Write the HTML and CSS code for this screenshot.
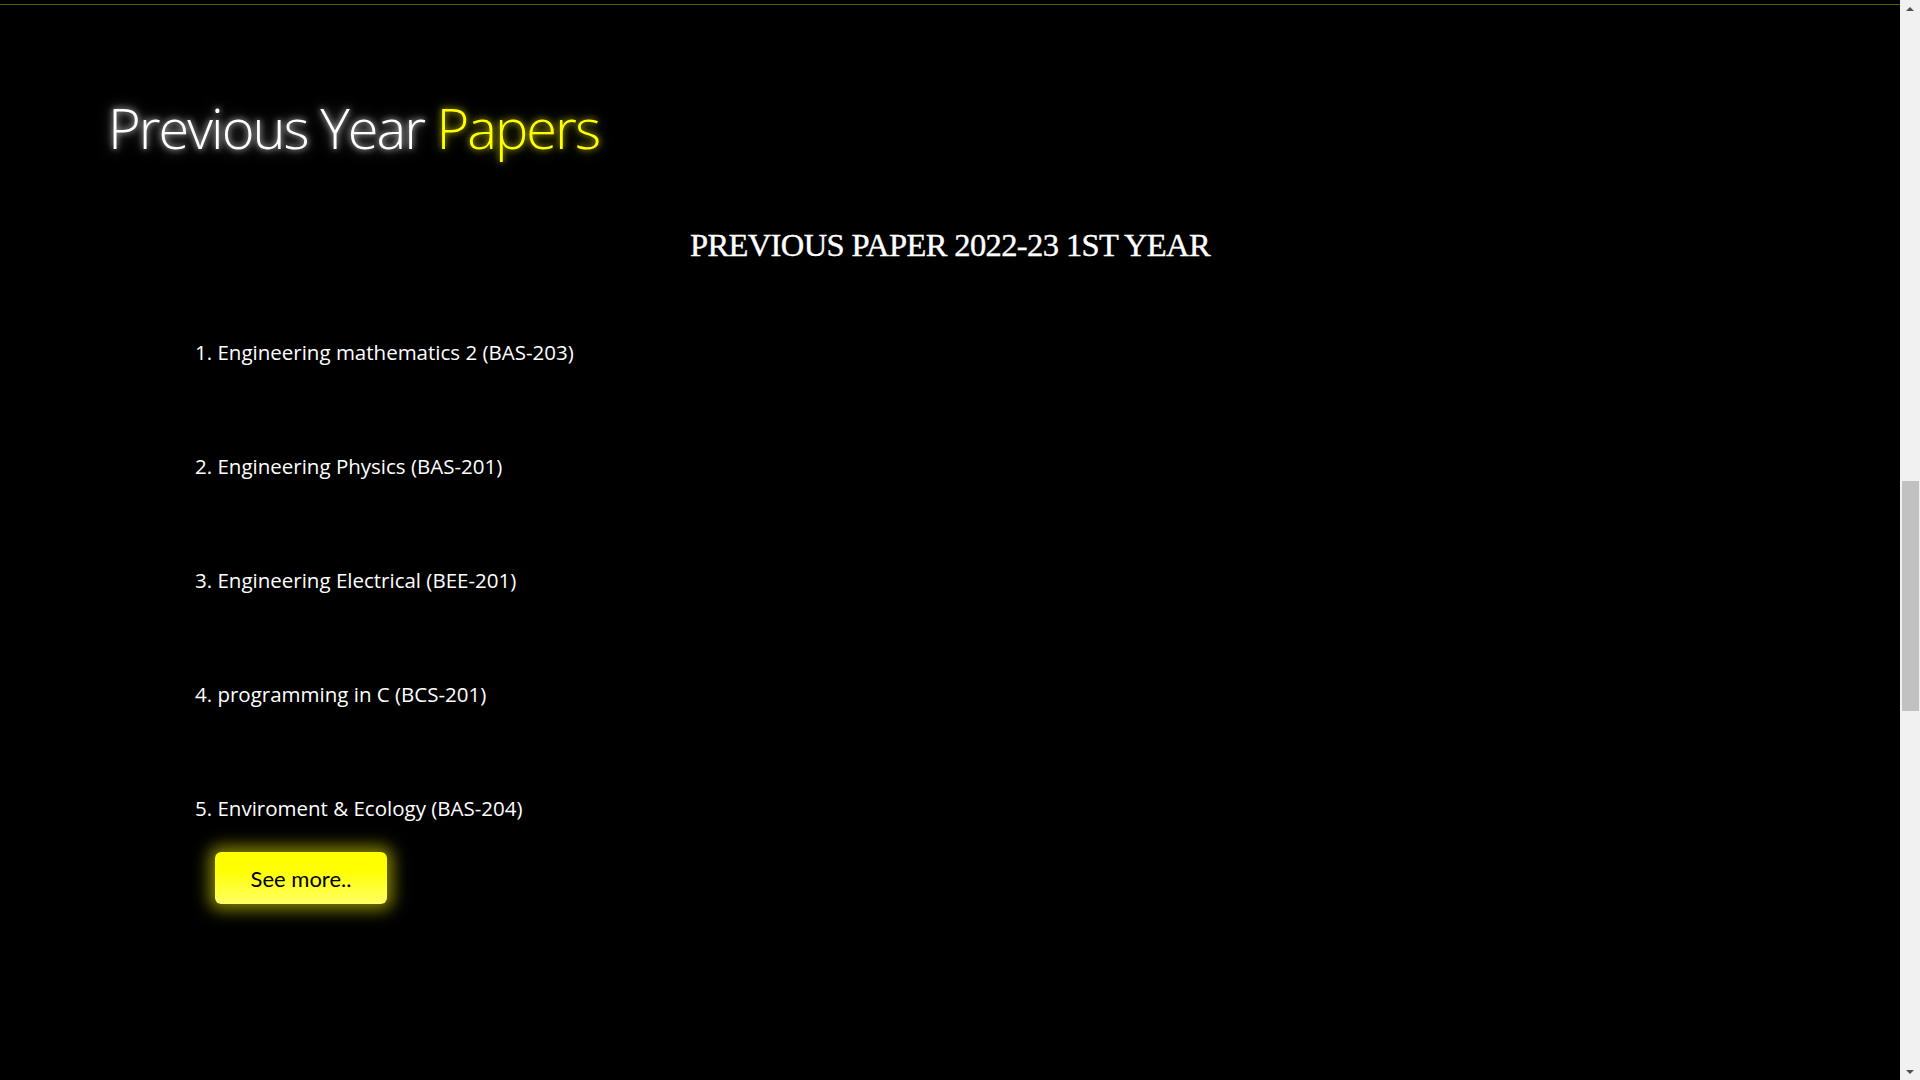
FILE: index.html
```html
<!DOCTYPE html>
<html lang="en">
<head>
<meta charset="utf-8">
<title>Previous Year Papers</title>
<link rel="stylesheet" href="styles.css">
</head>
<body>
<div class="page">
  <main class="main">
    <div class="topline"></div>
    <h1 class="title"><span class="title-white">Previous Year</span> <span class="title-yellow">Papers</span></h1>
    <h2 class="subtitle">Previous Paper 2022-23 1st Year</h2>
    <ul class="papers">
      <li class="paper">1. Engineering mathematics 2 (BAS-203)</li>
      <li class="paper">2. Engineering Physics (BAS-201)</li>
      <li class="paper">3. Engineering Electrical (BEE-201)</li>
      <li class="paper">4. programming in C (BCS-201)</li>
      <li class="paper">5. Enviroment &amp; Ecology (BAS-204)</li>
    </ul>
    <button class="more">See more..</button>
  </main>
  <aside class="scrollbar">
    <div class="arrow arrow-up"></div>
    <div class="track">
      <div class="track-gap"></div>
      <div class="thumb"></div>
    </div>
    <div class="arrow arrow-down"></div>
  </aside>
</div>
</body>
</html>
```
FILE: styles.css
```css
html, body {
  margin: 0;
  padding: 0;
  background: #000;
  height: 100%;
  overflow: hidden;
}

.page {
  display: flex;
  height: 1080px;
}

.main {
  flex: 1;
  display: flex;
  flex-direction: column;
  align-items: flex-start;
}

.topline {
  align-self: stretch;
  margin-top: 4px;
  height: 1px;
  background: #5e5e00;
}

.title {
  margin: 88px 0 0 0;
  padding-left: 108px;
  font-family: "Open Sans", sans-serif;
  font-weight: 300;
  font-size: 56px;
  line-height: 68px;
  letter-spacing: -2px;
}

.title-white {
  color: #fff;
  text-shadow: 0 0 6px rgba(255, 255, 255, 0.8), 0 0 14px rgba(255, 255, 255, 0.5);
}

.title-yellow {
  color: #ffff00;
  text-shadow: 0 0 6px rgba(255, 255, 0, 0.7), 0 0 14px rgba(255, 255, 0, 0.4);
}

.subtitle {
  align-self: stretch;
  margin: 64px 0 0 0;
  text-align: center;
  text-transform: uppercase;
  font-family: "Liberation Serif", serif;
  font-weight: 400;
  font-size: 32.5px;
  line-height: 40px;
  letter-spacing: -0.6px;
  -webkit-text-stroke: 0.4px #fff;
  color: #fff;
}

.papers {
  list-style: none;
  margin: 73px 0 0 0;
  padding: 0 0 0 195px;
  display: flex;
  flex-direction: column;
  gap: 86px;
}

.paper {
  font-family: "Open Sans", sans-serif;
  font-size: 20.5px;
  line-height: 28px;
  color: #fff;
}

.more {
  margin: 30px 0 0 215px;
  width: 172px;
  height: 52px;
  border: none;
  border-radius: 6px;
  background: linear-gradient(#ffff00 35%, #ffff66);
  box-shadow: 0 0 16px 6px rgba(255, 255, 0, 0.5);
  font-family: "Lato", sans-serif;
  font-size: 22px;
  color: #000;
  padding: 0;
}

.scrollbar {
  width: 20px;
  background: #f1f1f1;
  display: flex;
  flex-direction: column;
}

.arrow {
  height: 17px;
  display: flex;
  align-items: center;
  justify-content: center;
}

.arrow-up::before {
  content: "";
  border-left: 4px solid transparent;
  border-right: 4px solid transparent;
  border-bottom: 4px solid #505050;
}

.arrow-down::before {
  content: "";
  border-left: 4px solid transparent;
  border-right: 4px solid transparent;
  border-top: 4px solid #505050;
}

.track {
  flex: 1;
  display: flex;
  flex-direction: column;
  align-items: flex-end;
}

.track-gap {
  height: 464px;
}

.thumb {
  width: 17px;
  height: 230px;
  margin-right: 1px;
  background: #c1c1c1;
}
```
